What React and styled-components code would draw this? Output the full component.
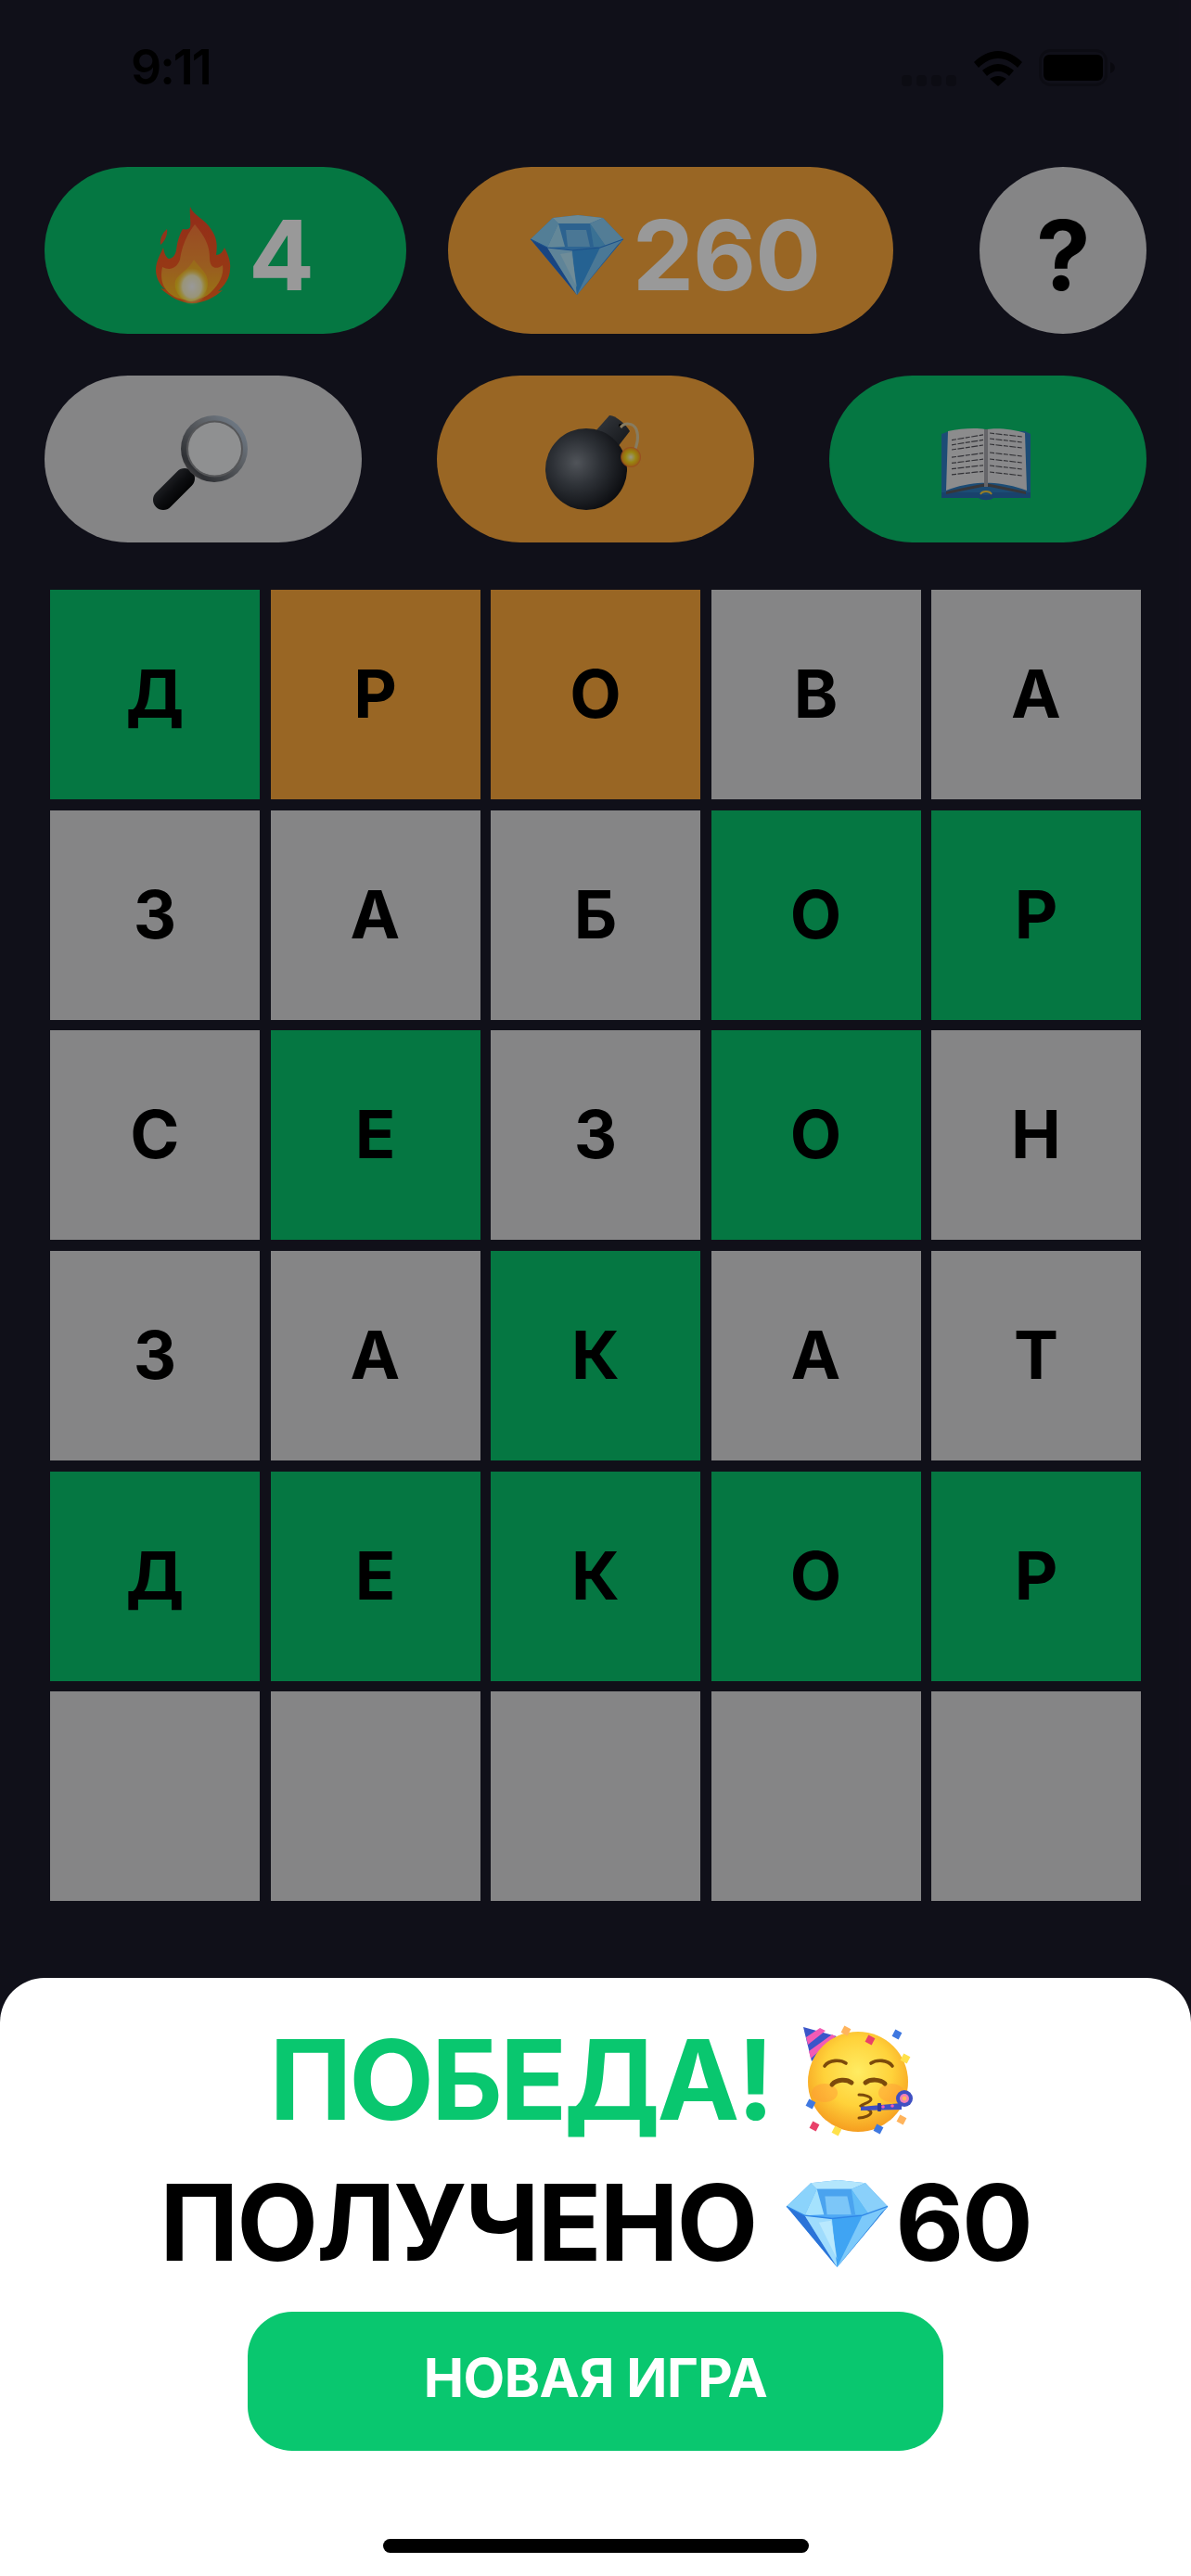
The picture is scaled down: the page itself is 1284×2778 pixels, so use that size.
import React from 'react';
import styled, { createGlobalStyle } from 'styled-components';

const GREEN = '#09c76f';
const AMBER = '#ffab3c';
const GRAY = '#dedee0';

const TONES = { green: GREEN, amber: AMBER, gray: GRAY };

const GlobalStyle = createGlobalStyle`
  html, body {
    margin: 0;
    padding: 0;
    background: #1c1b2b;
  }
  * {
    box-sizing: border-box;
  }
`;

const Screen = styled.div`
  position: relative;
  width: 1284px;
  height: 2778px;
  overflow: hidden;
  background: #1c1b2b;
  font-family: Inter, 'Liberation Sans', sans-serif;
`;

const StatusBar = styled.div`
  height: 180px;
  display: flex;
  justify-content: space-between;
  align-items: flex-start;
  padding: 53px 82px 0 141px;
`;

const Clock = styled.div`
  font-size: 52px;
  line-height: 40px;
  font-weight: 600;
  letter-spacing: -2px;
  color: #000;
`;

const StatusIcons = styled.div`
  display: flex;
  align-items: flex-end;
  gap: 18px;
`;

const Row = styled.div`
  display: flex;
  justify-content: ${(p) => p.$justify || 'space-between'};
  padding: 0 48px;
  margin-bottom: 45px;
`;

const Pill = styled.div`
  width: ${(p) => p.$width}px;
  height: 180px;
  flex: none;
  border-radius: 90px;
  background: ${(p) => TONES[p.$tone]};
  display: flex;
  align-items: center;
  justify-content: center;
  font-size: 105px;
  line-height: 1;
  font-weight: 700;
  letter-spacing: -1px;
  color: ${(p) => (p.$dark ? '#000' : '#fff')};
`;

const PillText = styled.span`
  position: relative;
  top: 4px;
`;

const HelpPill = styled(Pill)`
  margin-left: 93px;
`;

const AmberPill = styled(Pill)`
  margin-left: 45px;
`;

const Board = styled.div`
  display: grid;
  grid-template-columns: repeat(5, 226px);
  grid-auto-rows: 226px;
  gap: 11.7px 11.5px;
  margin: 51px 0 0 54px;
`;

const Tile = styled.div`
  background: ${(p) => TONES[p.$tone]};
  display: flex;
  align-items: center;
  justify-content: center;
  padding-bottom: 3px;
  font-size: 72px;
  font-weight: 700;
  color: #000;
`;

const Backdrop = styled.div`
  position: absolute;
  inset: 0;
  background: rgba(0, 0, 0, 0.4);
  display: flex;
  flex-direction: column;
  justify-content: flex-end;
`;

const Sheet = styled.div`
  height: 645px;
  background: #fff;
  border-radius: 48px 48px 0 0;
  display: flex;
  flex-direction: column;
  align-items: center;
  padding-top: 46px;
`;

const ResultLine = styled.div`
  display: flex;
  align-items: center;
  justify-content: center;
  height: ${(p) => p.$height}px;
  margin-top: ${(p) => p.$gap || 0}px;
  font-size: ${(p) => p.$size}px;
  line-height: 1;
  font-weight: 700;
  letter-spacing: ${(p) => p.$spacing}px;
  color: ${(p) => p.$color};
  white-space: nowrap;
`;

const PartyWrap = styled.span`
  display: flex;
  margin: 0 6px 0 28px;
`;

const GemWrap = styled.span`
  display: flex;
  margin: -8px -3px 0 22px;
`;

const NewGame = styled.button`
  width: 750px;
  height: 150px;
  margin-top: 31px;
  padding: 0 0 8px;
  border: 0;
  border-radius: 48px;
  background: ${GREEN};
  color: #fff;
  font-family: inherit;
  font-size: 58px;
  font-weight: 700;
  letter-spacing: -0.5px;
`;

const HomeBar = styled.div`
  width: 459px;
  height: 15px;
  margin-top: 95px;
  border-radius: 8px;
  background: #000;
`;

const BOARD = [
  ['Д:green', 'Р:amber', 'О:amber', 'В:gray', 'А:gray'],
  ['З:gray', 'А:gray', 'Б:gray', 'О:green', 'Р:green'],
  ['С:gray', 'Е:green', 'З:gray', 'О:green', 'Н:gray'],
  ['З:gray', 'А:gray', 'К:green', 'А:gray', 'Т:gray'],
  ['Д:green', 'Е:green', 'К:green', 'О:green', 'Р:green'],
  [':gray', ':gray', ':gray', ':gray', ':gray'],
];

function SignalDots() {
  return (
    <svg width="60" height="12" viewBox="0 0 60 12">
      {[0, 16, 32, 48].map((x) => (
        <rect key={x} x={x} y="0" width="11" height="12" rx="4" fill="#000" fillOpacity="0.25" />
      ))}
    </svg>
  );
}

function WifiIcon() {
  return (
    <svg width="52" height="38" viewBox="0 0 52 38">
      <path d="M0 12C7 5 16 0 26 0s19 5 26 12l-5 6C41 12 34 8 26 8S11 12 5 18Z" fill="#000" />
      <path d="M9 21c5-4 11-7 17-7s12 3 17 7l-5 6c-3-3-7-5-12-5s-9 2-12 5Z" fill="#000" />
      <path d="M17 30c3-2 6-3 9-3s6 1 9 3l-9 8Z" fill="#000" />
    </svg>
  );
}

function BatteryIcon() {
  return (
    <svg width="82" height="40" viewBox="0 0 82 40">
      <rect x="1.5" y="1.5" width="71" height="37" rx="11" fill="none" stroke="#000" strokeOpacity="0.25" strokeWidth="3" />
      <rect x="5" y="6" width="64" height="28" rx="6" fill="#000" />
      <path d="M77 14c3 1 5 3 5 6s-2 5-5 6Z" fill="#000" fillOpacity="0.4" />
    </svg>
  );
}

function FlameIcon() {
  return (
    <svg width="120" height="120" viewBox="0 0 120 120">
      <defs>
        <linearGradient id="flameOuter" x1="0" y1="0" x2="0" y2="1">
          <stop offset="0" stopColor="#f4492a" />
          <stop offset="1" stopColor="#ff6a1f" />
        </linearGradient>
        <linearGradient id="flameMid" x1="0" y1="0" x2="0" y2="1">
          <stop offset="0" stopColor="#ff7c3c" />
          <stop offset="0.55" stopColor="#ff9a36" />
          <stop offset="1" stopColor="#ffc21f" />
        </linearGradient>
        <linearGradient id="flameInner" x1="0" y1="0" x2="0" y2="1">
          <stop offset="0" stopColor="#ffad2e" />
          <stop offset="1" stopColor="#ffe21a" />
        </linearGradient>
        <radialGradient id="flameCore">
          <stop offset="0" stopColor="#fff" />
          <stop offset="0.6" stopColor="#fff7c8" />
          <stop offset="1" stopColor="#ffe65a" stopOpacity="0" />
        </radialGradient>
      </defs>
      <path d="M32 37C33 43 30 50 25 54 24 48 27 41 32 37Z" fill="#f4582e" />
      <path
        d="M57 13C60 22 73 26 80 38 87 48 86 58 85 65 89 65 92 62 94 57 98 65 101 72 100 80 100 90 94 98 87 104L92 103C84 110 72 117 59 117 47 117 35 110 25 101L30 102C23 96 20 88 20 81 20 72 25 64 28 57 29 63 31 68 34 69 38 69 41 65 42 60 43 50 46 42 49 37 53 38 56 37 57 35 58 28 56 20 57 13Z"
        fill="url(#flameOuter)"
      />
      <path
        d="M62 32C70 42 78 52 78 68 78 78 84 82 92 76 94 88 86 100 76 108 68 114 50 115 40 110 28 103 24 92 27 78 35 82 42 80 46 70 48 55 54 42 62 32Z"
        fill="url(#flameMid)"
      />
      <path d="M61 70C68 80 76 84 76 95 76 105 68 114 58 115 47 114 39 104 41 93 44 85 55 82 61 70Z" fill="url(#flameInner)" />
      <ellipse cx="59" cy="99" rx="17" ry="20" fill="url(#flameCore)" />
    </svg>
  );
}

function GemIcon({ size }) {
  return (
    <svg width={size} height={size} viewBox="0 0 120 120">
      <polygon points="10,48 34,25 61,22 88,25 110,48 60,108" fill="#4ea8f5" />
      <polygon points="10,48 34,25 40,31 28,57" fill="#8bd3fb" />
      <polygon points="34,25 61,22 88,25 74,31 40,31" fill="#b3e6fd" />
      <polygon points="88,25 110,48 92,57 74,31" fill="#8ad0fa" />
      <polygon points="40,31 74,31 78,56 47,56" fill="#4aa3ef" />
      <polygon points="40,31 47,56 28,57" fill="#a5e2fd" />
      <polygon points="74,31 92,57 78,56" fill="#62bdf7" />
      <polygon points="48,38 70,38 74,56 50,56" fill="#7cc6f8" />
      <polygon points="10,48 28,57 60,108" fill="#2b73d8" />
      <polygon points="28,57 55,60 60,108" fill="#9fdcfd" />
      <polygon points="55,60 85,57 60,108" fill="#3fa4f3" />
      <polygon points="85,57 110,48 60,108" fill="#7cc9fa" />
      <polygon points="104,54 110,48 60,108" fill="#2a78d8" />
      <polygon points="42,64 54,62 60,100" fill="#c4eefe" fillOpacity="0.7" />
      <polyline points="10,48 28,57 55,60 85,57 110,48" fill="none" stroke="#2f86e6" strokeWidth="1.2" />
    </svg>
  );
}

function MagnifierIcon() {
  return (
    <svg width="120" height="120" viewBox="0 0 120 120">
      <defs>
        <linearGradient id="ringGrad" x1="1" y1="0" x2="0" y2="1">
          <stop offset="0" stopColor="#c5dcf5" />
          <stop offset="0.4" stopColor="#9aa0a8" />
          <stop offset="0.8" stopColor="#4e5157" />
          <stop offset="1" stopColor="#b7a9a4" />
        </linearGradient>
        <linearGradient id="handleGrad" x1="0" y1="0" x2="1" y2="1">
          <stop offset="0" stopColor="#3a3d44" />
          <stop offset="0.5" stopColor="#15171b" />
          <stop offset="1" stopColor="#000" />
        </linearGradient>
      </defs>
      <line x1="44" y1="71" x2="52" y2="79" stroke="#b8b9bd" strokeWidth="7" />
      <line x1="40" y1="81" x2="17" y2="104" stroke="url(#handleGrad)" strokeWidth="22" strokeLinecap="round" />
      <circle cx="72" cy="49" r="36" fill="url(#ringGrad)" />
      <circle cx="72.5" cy="49" r="30.5" fill="#8e8f93" />
      <circle cx="72.5" cy="49" r="28.5" fill="#eef0f2" />
    </svg>
  );
}

function BombIcon() {
  return (
    <svg width="120" height="120" viewBox="0 0 120 120">
      <defs>
        <radialGradient id="bombBody" cx="0.38" cy="0.42" r="0.65">
          <stop offset="0" stopColor="#868c95" />
          <stop offset="0.45" stopColor="#4c525b" />
          <stop offset="1" stopColor="#12141a" />
        </radialGradient>
        <linearGradient id="bombNeck" x1="0" y1="0" x2="1" y2="1">
          <stop offset="0" stopColor="#5a6069" />
          <stop offset="1" stopColor="#1c1f25" />
        </linearGradient>
        <radialGradient id="sparkGrad">
          <stop offset="0" stopColor="#fffbe0" />
          <stop offset="0.5" stopColor="#ffe01e" />
          <stop offset="0.85" stopColor="#ffab1e" />
          <stop offset="1" stopColor="#ff6a3a" stopOpacity="0.7" />
        </radialGradient>
      </defs>
      <path d="M75 13C80 12 93 22 97 30L80 52 60 30Z" fill="url(#bombNeck)" />
      <circle cx="50" cy="71" r="44" fill="url(#bombBody)" />
      <circle cx="87" cy="24" r="2" fill="#000" />
      <path d="M87 26C91 21 100 20 104 28 108 38 104 48 100 56" fill="none" stroke="#e2cfa2" strokeWidth="3" />
      <circle cx="98" cy="58" r="11" fill="url(#sparkGrad)" />
    </svg>
  );
}

const BOOK_LINES = [35, 41, 47, 56, 63, 70, 77];

function BookIcon() {
  return (
    <svg width="120" height="120" viewBox="0 0 120 120">
      <path d="M10 33 18 30 100 30 106 33 106 100 65 100 C63 104 53 104 51 100 L10 100Z" fill="#2f7fc4" />
      <path d="M10 96H51C53 100 63 100 65 96H106V102H66C63 105 53 105 50 102H10Z" fill="#2a6fb5" />
      <path d="M15 95 58 86 101 95 101 98 62 90H54L15 98Z" fill="#5c5c62" />
      <path d="M17 30C30 27 48 26 57 28V86C46 85 28 89 15 94Z" fill="#e9e9ec" />
      <path d="M59 28C70 26 88 28 100 32L102 94C88 89 70 85 59 86Z" fill="#e5e5e8" />
      <path d="M56 28H60V90H56Z" fill="#a9a9af" />
      {BOOK_LINES.map((y, i) => (
        <g key={y} stroke="#55555c" strokeWidth="1.2" strokeDasharray="5 1.5 7 1.5" fill="none">
          <path d={`M21 ${y - 1 + (7 - i) * 0.8}L55 ${y - 4 + (7 - i) * 0.4}`} />
          <path d={`M62 ${y - 3}L97 ${y + 1}`} />
        </g>
      ))}
      <path d="M52 98C54 94 62 94 64 98" fill="none" stroke="#ffd23c" strokeWidth="1.8" />
    </svg>
  );
}

const CONFETTI = [
  [52, 11, '#ffb45c'],
  [78, 21, '#e9416a'],
  [107, 15, '#3f78e0'],
  [116, 41, '#ffe14a'],
  [14, 90, '#3f78e0'],
  [18, 114, '#e9416a'],
  [42, 119, '#ffe14a'],
  [87, 117, '#3f78e0'],
  [112, 107, '#ffb45c'],
];

function PartyIcon() {
  return (
    <svg width="128" height="128" viewBox="0 0 128 128">
      <defs>
        <radialGradient id="partyFace" cx="0.5" cy="0.4" r="0.62">
          <stop offset="0" stopColor="#ffec62" />
          <stop offset="0.55" stopColor="#ffd23a" />
          <stop offset="1" stopColor="#f59a1e" />
        </radialGradient>
      </defs>
      <path d="M6 7 15 44 42 17Z" fill="#3a55c9" />
      <path d="M9 18 24 8 30 11 11 26ZM12 33 37 15 41 17 14 41Z" fill="#f25bb5" />
      <circle cx="65" cy="66" r="54" fill="url(#partyFace)" />
      <ellipse cx="29" cy="78" rx="14" ry="10" fill="#ff9a3a" fillOpacity="0.45" />
      <ellipse cx="101" cy="78" rx="14" ry="10" fill="#ff9a3a" fillOpacity="0.45" />
      <g fill="none" stroke="#7c4a0b" strokeLinecap="round">
        <path d="M29 49C34 42 46 42 52 46" strokeWidth="3.6" />
        <path d="M79 46C85 42 97 42 102 49" strokeWidth="3.6" />
        <path d="M37 69C42 63 53 63 58 67" strokeWidth="5" />
        <path d="M73 67C78 63 89 63 94 68" strokeWidth="5" />
        <path d="M66 80C72 80 79 82 79 85 79 88 70 90 68 92 70 94 79 96 79 99 79 102 72 105 66 105" strokeWidth="3" />
      </g>
      <path d="M68 93 112 89 112 96 68 97Z" fill="#3f4fc2" />
      <circle cx="92" cy="93" r="1.8" fill="#f25bb5" />
      <circle cx="102" cy="92" r="1.8" fill="#f25bb5" />
      <rect x="86" y="89" width="4" height="9" rx="1" fill="#2f3a99" />
      <circle cx="115" cy="84" r="9" fill="#3f4fc2" />
      <circle cx="115" cy="84" r="5" fill="#f07fb8" />
      <circle cx="115" cy="84" r="2.4" fill="#ffb45c" />
      {CONFETTI.map(([x, y, color]) => (
        <rect
          key={`${x}-${y}`}
          x={x - 4}
          y={y - 4}
          width="8"
          height="8"
          fill={color}
          transform={`rotate(28 ${x} ${y})`}
        />
      ))}
    </svg>
  );
}

function App() {
  return (
    <Screen>
      <GlobalStyle />
      <StatusBar>
        <Clock>9:11</Clock>
        <StatusIcons>
          <SignalDots />
          <WifiIcon />
          <BatteryIcon />
        </StatusIcons>
      </StatusBar>

      <Row $justify="flex-start">
        <Pill $tone="green" $width={390}>
          <FlameIcon />
          <PillText>4</PillText>
        </Pill>
        <AmberPill $tone="amber" $width={480}>
          <GemIcon size={120} />
          <PillText>260</PillText>
        </AmberPill>
        <HelpPill $tone="gray" $width={180} $dark>
          <PillText>?</PillText>
        </HelpPill>
      </Row>

      <Row>
        <Pill $tone="gray" $width={342}>
          <MagnifierIcon />
        </Pill>
        <Pill $tone="amber" $width={342}>
          <BombIcon />
        </Pill>
        <Pill $tone="green" $width={342}>
          <BookIcon />
        </Pill>
      </Row>

      <Board>
        {BOARD.flat().map((cell, i) => {
          const [letter, tone] = cell.split(':');
          return (
            <Tile key={i} $tone={tone}>
              {letter}
            </Tile>
          );
        })}
      </Board>

      <Backdrop>
        <Sheet>
          <ResultLine $height={128} $size={119} $spacing={-3} $color={GREEN}>
            ПОБЕДА!
            <PartyWrap>
              <PartyIcon />
            </PartyWrap>
          </ResultLine>
          <ResultLine $height={131} $gap={24} $size={114} $spacing={-2.2} $color="#000">
            ПОЛУЧЕНО
            <GemWrap>
              <GemIcon size={131} />
            </GemWrap>
            60
          </ResultLine>
          <NewGame>НОВАЯ ИГРА</NewGame>
          <HomeBar />
        </Sheet>
      </Backdrop>
    </Screen>
  );
}

export default App;
